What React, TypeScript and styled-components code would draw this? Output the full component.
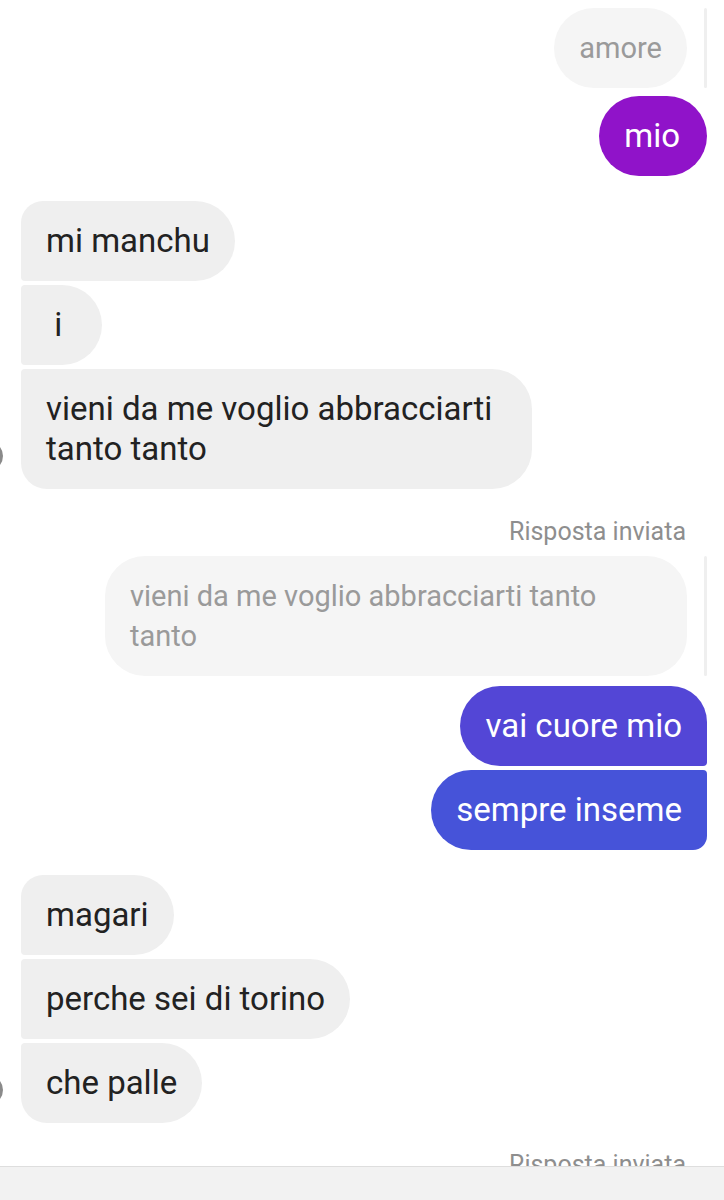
import React from "react";
import styled, { createGlobalStyle, css } from "styled-components";

const Global = createGlobalStyle`
  html, body { margin: 0; padding: 0; background: #ffffff; }
  body {
    width: 724px;
    height: 1200px;
    overflow: hidden;
    font-family: Roboto, "Noto Sans", "Liberation Sans", sans-serif;
    -webkit-font-smoothing: antialiased;
  }
`;

const Page = styled.div`
  width: 724px;
  height: 1200px;
  box-sizing: border-box;
  padding: 8px 17px 0 21px;
  display: flex;
  flex-direction: column;
  overflow: hidden;
`;

type Side = "left" | "right";
type Pos = "single" | "first" | "middle" | "last";

const Group = styled.div<{ $side: Side; $top: number }>`
  display: flex;
  flex-direction: column;
  gap: 4px;
  align-items: ${(p) => (p.$side === "left" ? "flex-start" : "flex-end")};
  margin-top: ${(p) => p.$top}px;
`;

const ReceivedRow = styled.div<{ $top: number }>`
  display: flex;
  align-items: flex-end;
  margin-top: ${(p) => p.$top}px;
`;

const Avatar = styled.div`
  width: 30px;
  height: 30px;
  border-radius: 50%;
  background: #8a8a8a;
  margin-left: -48px;
  margin-right: 18px;
  margin-bottom: 18px;
  flex: none;
`;

const radius = (side: Side, pos: Pos) => {
  const full = "40px";
  if (pos === "single") return css`border-radius: ${full};`;
  const big = side === "left" ? "22px" : "36px";
  const bigEnd = side === "left" ? "26px" : "14px";
  const small = "4px";
  const top = pos === "first" ? big : small;
  const bottom = pos === "last" ? bigEnd : small;
  if (side === "left") return css`border-radius: ${top} ${full} ${full} ${bottom};`;
  return css`border-radius: ${full} ${top} ${bottom} ${full};`;
};

const Bubble = styled.div<{ $side: Side; $pos: Pos; $bg: string; $fg: string; $pad?: number }>`
  box-sizing: border-box;
  max-width: 511px;
  padding: 20px ${(p) => p.$pad ?? 25}px 20px 25px;
  font-size: 33px;
  line-height: 40px;
  white-space: pre-wrap;
  background: ${(p) => p.$bg};
  color: ${(p) => p.$fg};
  ${(p) => radius(p.$side, p.$pos)}
`;

const Label = styled.div<{ $top: number }>`
  align-self: flex-end;
  margin-top: ${(p) => p.$top}px;
  margin-right: 21px;
  font-size: 25px;
  line-height: 30px;
  color: #8e8e8e;
`;

const QuoteRow = styled.div<{ $top: number }>`
  display: flex;
  justify-content: flex-end;
  align-items: stretch;
  gap: 17px;
  margin-top: ${(p) => p.$top}px;
`;

const Quote = styled.div<{ $wide?: boolean }>`
  box-sizing: border-box;
  width: ${(p) => (p.$wide ? "582px" : "auto")};
  padding: ${(p) => (p.$wide ? "20px 30px 20px 25px" : "20px 25px")};
  font-size: 29px;
  line-height: 40px;
  color: #9a9a9a;
  background: #f5f5f5;
  border-radius: 40px;
`;

const QuoteBar = styled.div`
  width: 3px;
  background: #efefef;
  border-radius: 2px;
`;

const BottomBar = styled.div`
  position: fixed;
  left: 0;
  right: 0;
  bottom: 0;
  height: 33px;
  background: #f2f2f2;
  border-top: 1px solid #dedede;
`;

const RECEIVED_BG = "#efefef";
const RECEIVED_FG = "#222222";

export default function App() {
  return (
    <>
      <Global />
      <Page>
        <QuoteRow $top={0}>
          <Quote>amore</Quote>
          <QuoteBar />
        </QuoteRow>
        <Group $side="right" $top={8}>
          <Bubble $side="right" $pos="single" $bg="#9013c9" $fg="#ffffff" $pad={27}>
            mio
          </Bubble>
        </Group>

        <ReceivedRow $top={25}>
          <Avatar />
          <Group $side="left" $top={0}>
            <Bubble $side="left" $pos="first" $bg={RECEIVED_BG} $fg={RECEIVED_FG}>
              mi manchu
            </Bubble>
            <Bubble $side="left" $pos="middle" $bg={RECEIVED_BG} $fg={RECEIVED_FG} $pad={32}>
              {" i "}
            </Bubble>
            <Bubble $side="left" $pos="last" $bg={RECEIVED_BG} $fg={RECEIVED_FG} $pad={34}>
              vieni da me voglio abbracciarti tanto tanto
            </Bubble>
          </Group>
        </ReceivedRow>

        <Label $top={28}>Risposta inviata</Label>
        <QuoteRow $top={9}>
          <Quote $wide>vieni da me voglio abbracciarti tanto tanto</Quote>
          <QuoteBar />
        </QuoteRow>
        <Group $side="right" $top={10}>
          <Bubble $side="right" $pos="first" $bg="#5346d6" $fg="#ffffff">
            vai cuore mio
          </Bubble>
          <Bubble $side="right" $pos="last" $bg="#4653d9" $fg="#ffffff">
            sempre inseme
          </Bubble>
        </Group>

        <ReceivedRow $top={25}>
          <Avatar />
          <Group $side="left" $top={0}>
            <Bubble $side="left" $pos="first" $bg={RECEIVED_BG} $fg={RECEIVED_FG}>
              magari
            </Bubble>
            <Bubble $side="left" $pos="middle" $bg={RECEIVED_BG} $fg={RECEIVED_FG}>
              perche sei di torino
            </Bubble>
            <Bubble $side="left" $pos="last" $bg={RECEIVED_BG} $fg={RECEIVED_FG}>
              che palle
            </Bubble>
          </Group>
        </ReceivedRow>

        <Label $top={27}>Risposta inviata</Label>
      </Page>
      <BottomBar />
    </>
  );
}
